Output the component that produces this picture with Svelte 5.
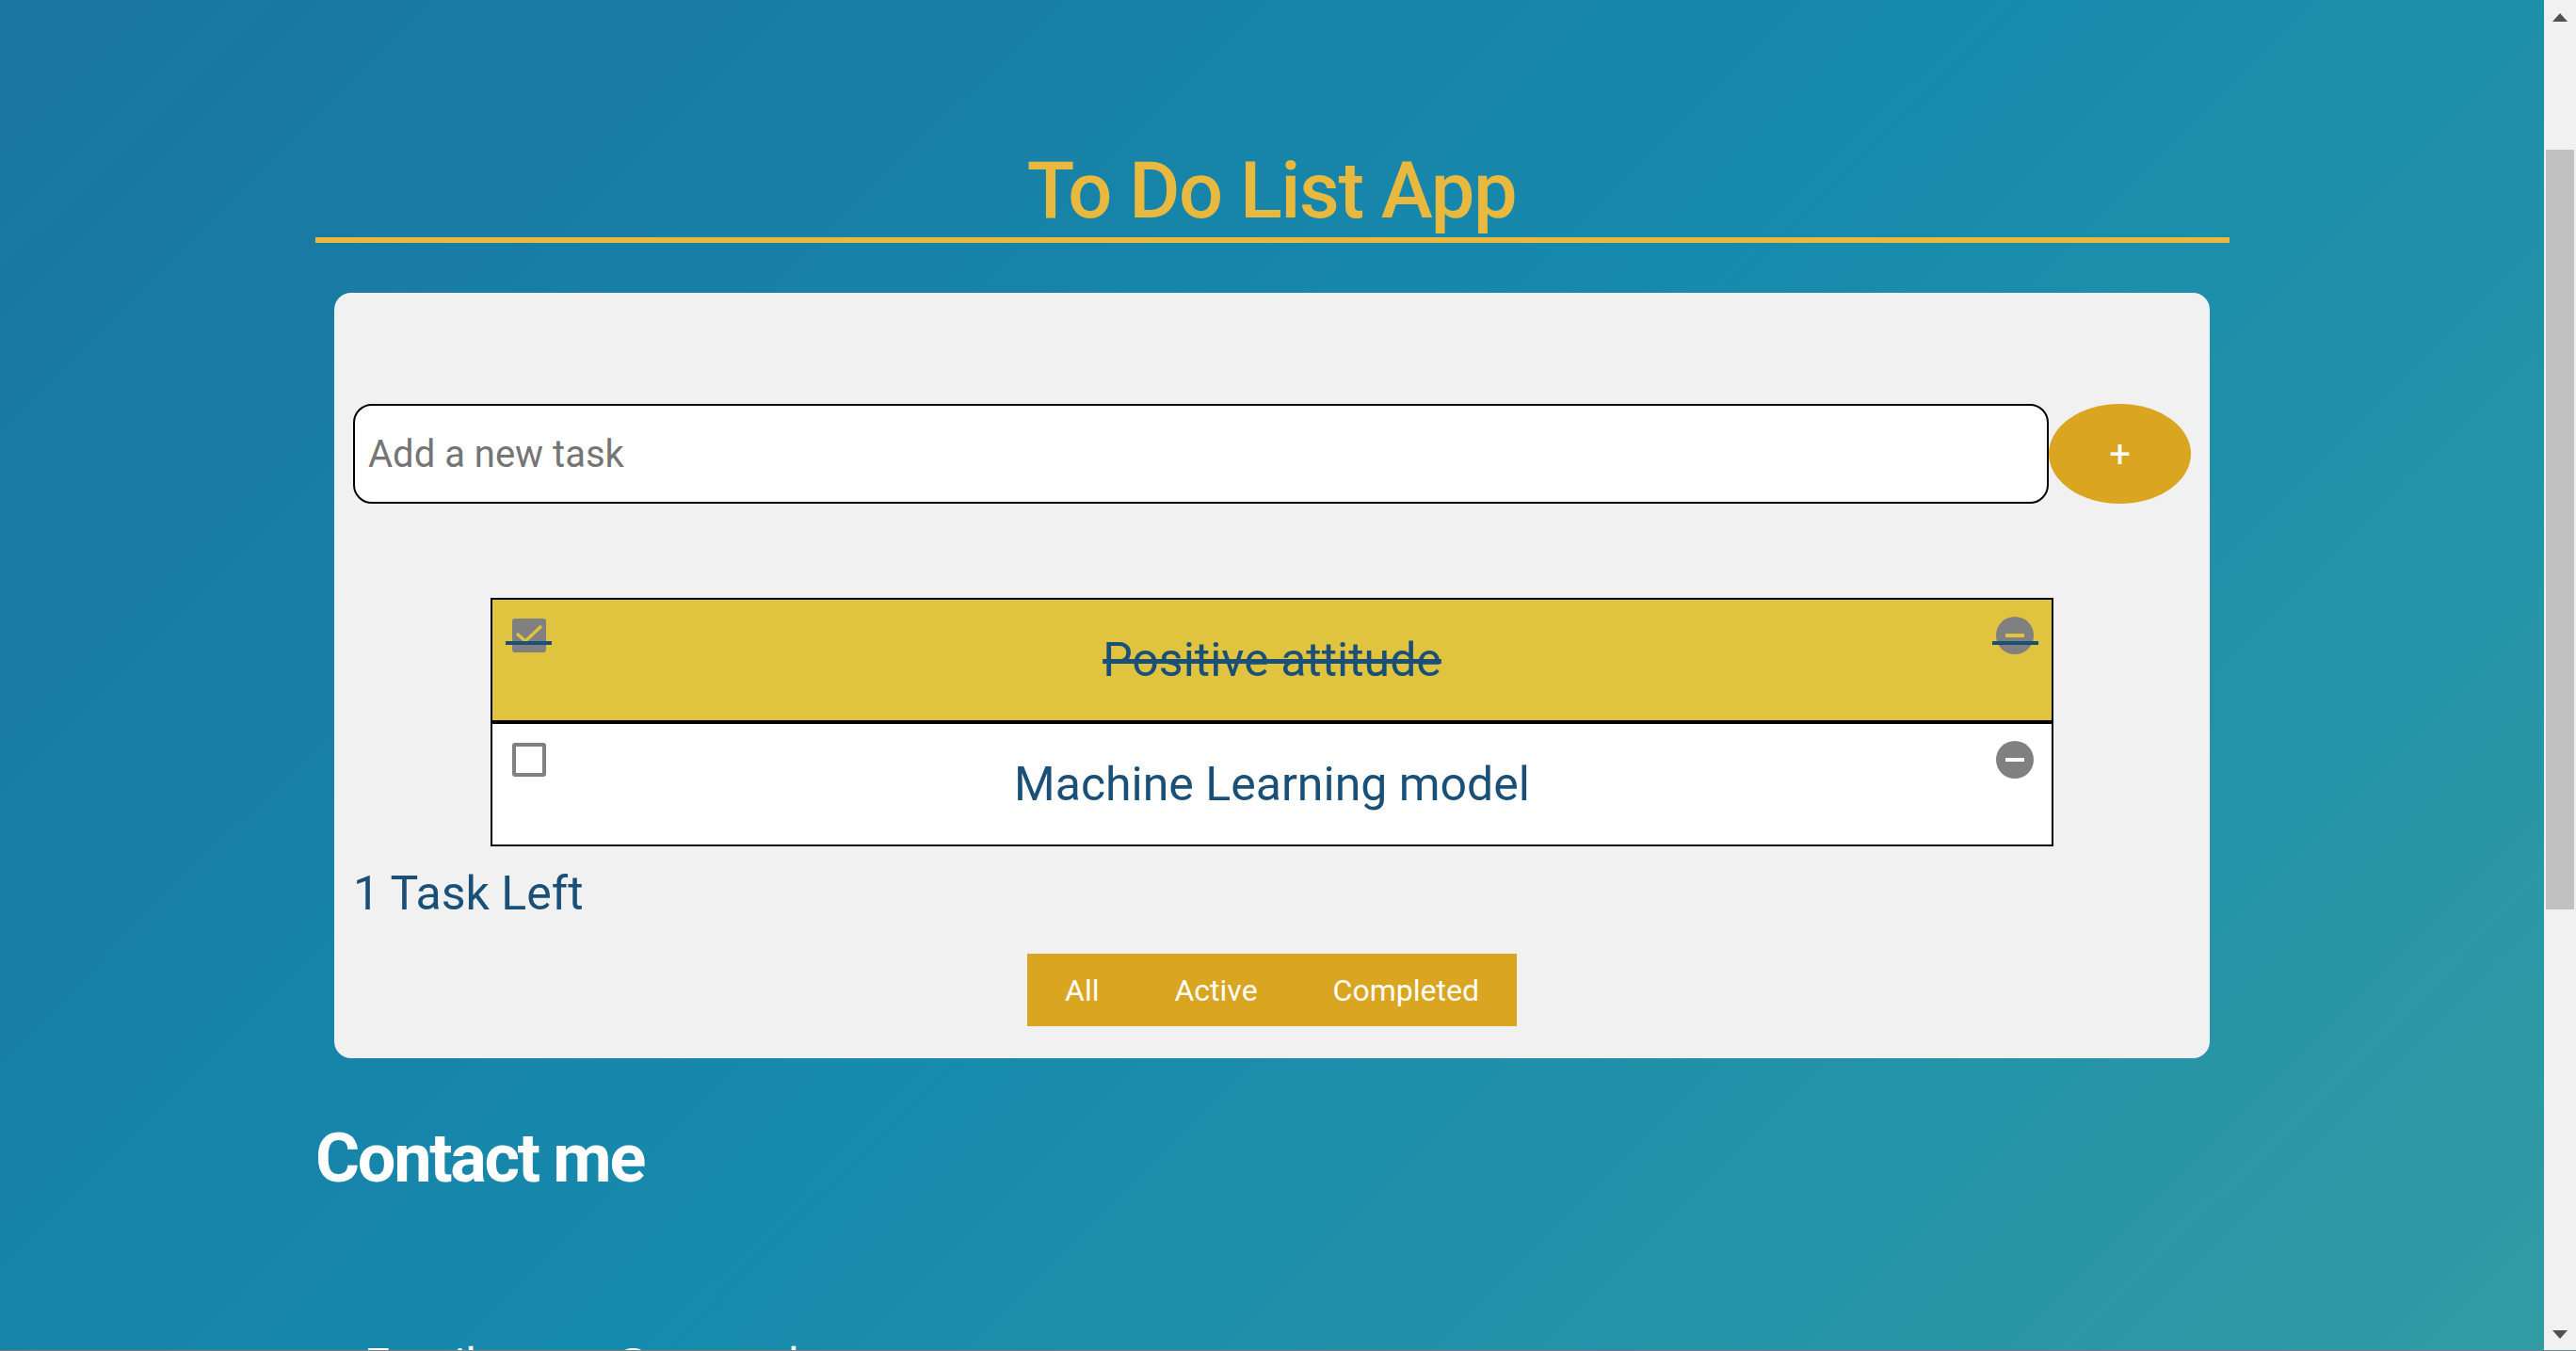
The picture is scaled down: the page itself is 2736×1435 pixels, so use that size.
<script>
  let tasks = [
    { id: 1, title: 'Positive attitude', done: true },
    { id: 2, title: 'Machine Learning model', done: false }
  ];
  let filters = ['All', 'Active', 'Completed'];
  $: left = tasks.filter((t) => !t.done).length;
</script>

<div class="screen">
  <main class="page">
    <div class="container">
      <h1 class="title">To Do List App</h1>
      <section class="card">
        <form class="add" on:submit|preventDefault>
          <input class="input" placeholder="Add a new task" />
          <button class="add-btn" type="button">+</button>
        </form>
        <ul class="list">
          {#each tasks as task (task.id)}
            <li class="task" class:done={task.done}>
              <span class="side">
                <span class="check">
                  {#if task.done}
                    <svg viewBox="0 0 36 36" width="36" height="36"><path d="M5 16l9 8L31 8" fill="none" stroke="#e0c43f" stroke-width="3.4" /></svg>
                  {/if}
                </span>
              </span>
              <span class="name">{task.title}</span>
              <span class="side right"><span class="del"><span class="bar"></span></span></span>
            </li>
          {/each}
        </ul>
        <p class="left">{left} Task Left</p>
        <div class="filters">
          {#each filters as f}
            <button class="filter" type="button">{f}</button>
          {/each}
        </div>
      </section>
      <h2 class="contact">Contact me</h2>
      <p class="contact-text">Email: name@example.com</p>
    </div>
  </main>
  <div class="scrollbar">
    <svg class="arrow" viewBox="0 0 16 9" width="16" height="9"><path d="M0 9L8 0l8 9z" fill="#505050" /></svg>
    <div class="track"><div class="thumb"></div></div>
    <svg class="arrow" viewBox="0 0 16 9" width="16" height="9"><path d="M0 0h16L8 9z" fill="#505050" /></svg>
  </div>
</div>

<style>
  :global(body) {
    margin: 0;
    overflow: hidden;
  }

  .screen {
    display: flex;
    height: 1434px;
    border-bottom: 1px solid #6f8088;
    font-family: Roboto, sans-serif;
  }

  .page {
    flex: 1;
    overflow: hidden;
    background: linear-gradient(135deg, #1a759f 0%, #168aad 50%, #319ba4 100%);
  }

  .container {
    width: 2033px;
    margin-left: 335px;
  }

  .title {
    margin: 0;
    padding: 151px 2px 0 0;
    height: 101px;
    line-height: 103px;
    border-bottom: 6px solid #e9b93f;
    text-align: center;
    font-size: 83px;
    font-weight: 500;
    letter-spacing: -1.4px;
    color: #e9b93f;
    box-sizing: content-box;
  }

  .card {
    box-sizing: border-box;
    width: 1992px;
    height: 813px;
    margin: 53px 0 0 20px;
    padding: 118px 20px 0;
    background: #f1f1f1;
    border-radius: 18px;
  }

  .add {
    display: flex;
    height: 106px;
  }

  .input {
    box-sizing: border-box;
    width: 1801px;
    padding: 0 14px;
    border: 2px solid #000;
    border-radius: 20px;
    background: #fff;
    font: 40px Roboto, sans-serif;
    outline: none;
  }

  .input::placeholder {
    color: #757575;
  }

  .add-btn {
    width: 151px;
    padding: 0;
    border: 0;
    border-radius: 50%;
    background: #daa520;
    color: #fff;
    font: 40px Roboto, sans-serif;
  }

  .list {
    list-style: none;
    width: 1660px;
    margin: 100px 0 0 146px;
    padding: 0;
  }

  .task {
    box-sizing: border-box;
    display: flex;
    height: 132px;
    border: 2px solid #000;
    background: #fff;
    color: #1a5078;
    font-size: 50px;
  }

  .task.done {
    background: #e0c43f;
  }

  .side {
    position: relative;
    flex: 0 0 64px;
    padding: 20px 0 0 21px;
    box-sizing: border-box;
  }

  .side.right {
    padding: 18px 0 0 5px;
  }

  .done .side::after {
    content: '';
    position: absolute;
    top: 44px;
    left: 14px;
    width: 49px;
    height: 4px;
    background: #1a5078;
  }

  .done .side.right::after {
    top: 44px;
    left: 1px;
  }

  .check {
    display: block;
    box-sizing: border-box;
    width: 36px;
    height: 36px;
    border: 4px solid #808080;
    border-radius: 3px;
    background: #fff;
  }

  .done .check {
    background: #808080;
    border: 0;
  }

  .check svg {
    display: block;
  }

  .del {
    display: flex;
    align-items: center;
    justify-content: center;
    width: 40px;
    height: 40px;
    border-radius: 50%;
    background: #808080;
  }

  .bar {
    width: 20px;
    height: 4px;
    background: #fff;
  }

  .done .bar {
    background: #e0c43f;
  }

  .name {
    flex: 1;
    text-align: center;
    line-height: 128px;
  }

  .done .name {
    text-decoration: line-through;
  }

  .left {
    margin: 22px 0 0;
    color: #1a5078;
    font-size: 50px;
    line-height: 56px;
  }

  .filters {
    display: flex;
    justify-content: center;
    margin-top: 36px;
  }

  .filter {
    padding: 0 40px;
    height: 77px;
    border: 0;
    background: #daa520;
    color: #fff;
    font: 32px Roboto, sans-serif;
  }

  .contact {
    margin: 69px 0 0;
    color: #fff;
    font-size: 72px;
    font-weight: 700;
    letter-spacing: -2.3px;
    line-height: 75px;
  }

  .contact-text {
    margin: 153px 0 0 52px;
    color: #fff;
    font-size: 48px;
  }

  .scrollbar {
    flex: 0 0 34px;
    display: flex;
    flex-direction: column;
    align-items: center;
    background: #f1f1f1;
  }

  .arrow {
    flex: none;
    margin: 14px 0 12px;
  }

  .track {
    flex: 1;
    width: 100%;
    padding-top: 124px;
    box-sizing: border-box;
  }

  .thumb {
    width: 30px;
    height: 807px;
    margin: 0 auto;
    background: #c1c1c1;
  }
</style>
